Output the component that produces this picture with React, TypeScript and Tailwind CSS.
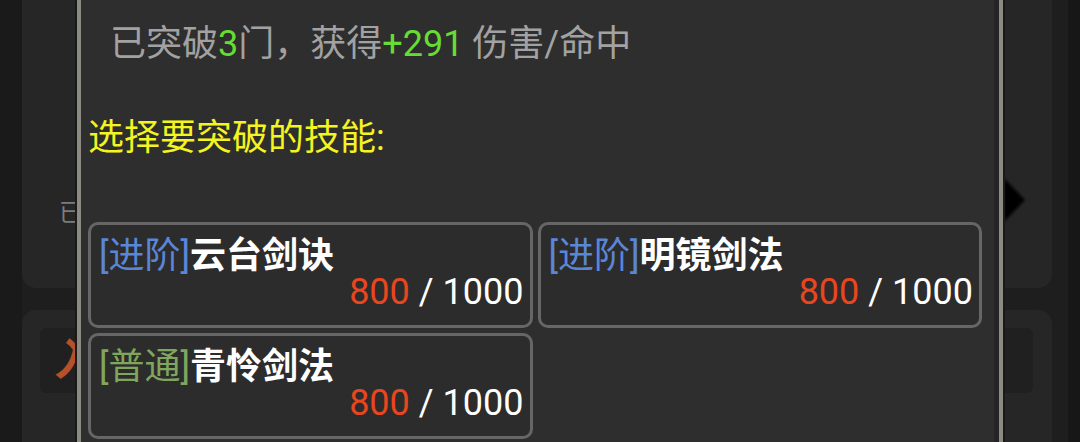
const skills = [
  { tier: '进阶', tierColor: 'text-[#5a86d8]', name: '云台剑诀', cur: 800, max: 1000 },
  { tier: '进阶', tierColor: 'text-[#5a86d8]', name: '明镜剑法', cur: 800, max: 1000 },
  { tier: '普通', tierColor: 'text-[#80a65e]', name: '青怜剑法', cur: 800, max: 1000 },
];

function SkillCard({ skill }: { skill: (typeof skills)[number] }) {
  return (
    <button className="flex flex-col rounded-[10px] border-[3px] border-[#666666] bg-[#2c2c2c] pt-[13px] pb-[15px] pl-[8px] pr-[6px] text-left">
      <div className="flex items-center leading-[36px]">
        <span className={skill.tierColor}>[{skill.tier}]</span>
        <span className="font-bold text-white">{skill.name}</span>
      </div>
      <div className="text-right leading-[36px] text-white">
        <span className="text-[#e8461e]">{skill.cur}</span> / {skill.max}
      </div>
    </button>
  );
}

export default function App() {
  return (
    <div
      className="relative flex h-[442px] w-full overflow-hidden bg-[#1e1e1e]"
      style={{ fontFamily: 'Roboto, "Noto Sans CJK SC", sans-serif' }}
    >
      {/* page behind the dialog */}
      <div className="w-[22px] bg-[#1a1a1a]" />
      <div className="flex w-[1030px] flex-col">
        <div className="flex h-[288px] justify-between rounded-b-[14px] bg-[#262626]">
          <span className="mt-[196px] ml-[37px] text-[24px] leading-[34px] text-[#7c7c7c]">已突破</span>
          <svg width="26" height="50" viewBox="0 0 26 50" className="mt-[175px] mr-[25px]">
            <defs>
              <filter id="soft">
                <feGaussianBlur stdDeviation="1.6" />
              </filter>
            </defs>
            <polygon points="3,3 24,25 3,47" fill="#000" filter="url(#soft)" />
          </svg>
        </div>
        <div className="mt-[22px] flex-1 rounded-t-[14px] bg-[#262626] pt-[18px] pl-[18px] pr-[19px]">
          <div className="flex h-[65px] items-center rounded-[6px] bg-[#202020] pl-[14px]">
            <span className="text-[44px] font-bold text-[#b4502a]">入门</span>
          </div>
        </div>
      </div>
      <div className="w-[16px] bg-[#1e1e1e]" />
      <div className="flex-1 bg-[#171717]" />

      {/* breakthrough dialog */}
      <div className="absolute top-0 bottom-0 left-[77px] flex w-[926px] border-x-[4px] border-[#8d8983] bg-[#2e2e2e] shadow-[0_0_0_2px_#1a1a1a]">
        <div className="flex-1 pt-[20px] pl-[7px] pr-[12px] text-[36px]">
          <p className="pl-[22px] leading-[48px] text-[#a2a2a2]">
            已突破<span className="text-[#66dd33]">3</span>门，获得
            <span className="text-[#66dd33]">+291</span> 伤害/命中
          </p>
          <p className="mt-[46px] leading-[48px] text-[#f4f420]">选择要突破的技能:</p>
          <div className="mt-[60px] grid grid-cols-2 gap-[5px]">
            {skills.map((s) => (
              <SkillCard key={s.name} skill={s} />
            ))}
          </div>
        </div>
        <div className="w-[5px] bg-[#242424]" />
      </div>
    </div>
  );
}
